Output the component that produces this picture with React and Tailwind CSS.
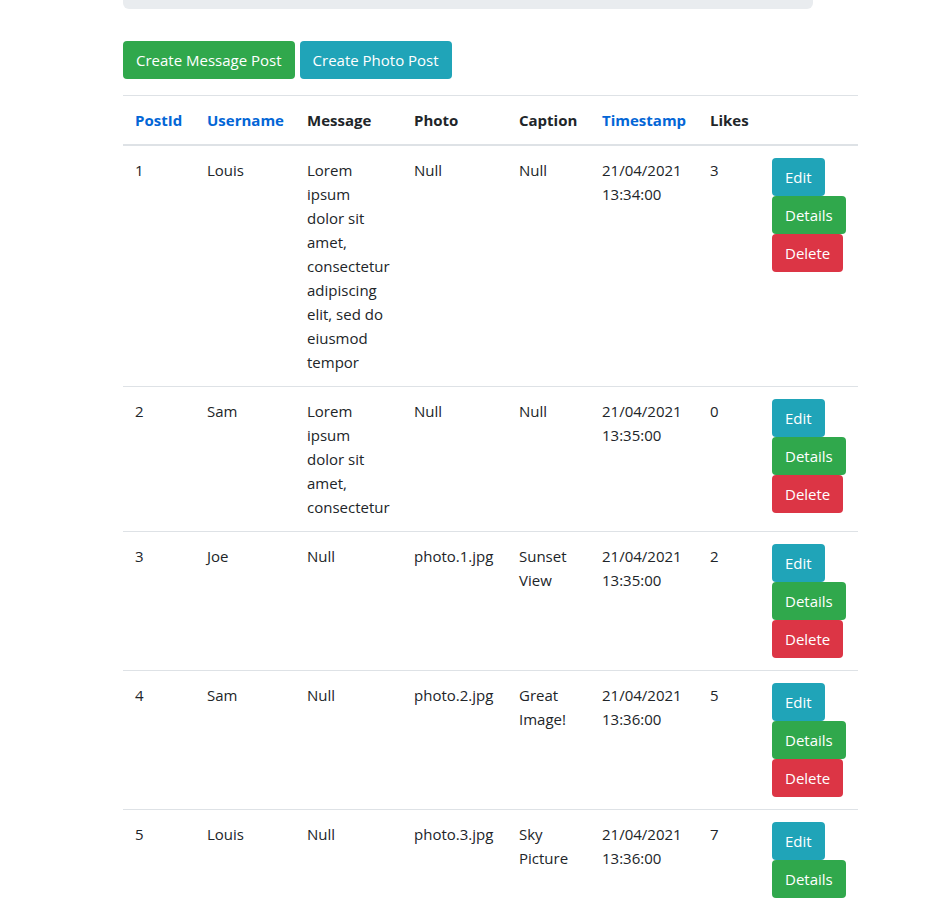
const posts = [
  {
    id: 1,
    username: 'Louis',
    message: 'Lorem ipsum dolor sit amet, consectetur adipiscing elit, sed do eiusmod tempor',
    photo: 'Null',
    caption: 'Null',
    date: '21/04/2021',
    time: '13:34:00',
    likes: 3,
  },
  {
    id: 2,
    username: 'Sam',
    message: 'Lorem ipsum dolor sit amet, consectetur',
    photo: 'Null',
    caption: 'Null',
    date: '21/04/2021',
    time: '13:35:00',
    likes: 0,
  },
  {
    id: 3,
    username: 'Joe',
    message: 'Null',
    photo: 'photo.1.jpg',
    caption: 'Sunset View',
    date: '21/04/2021',
    time: '13:35:00',
    likes: 2,
  },
  {
    id: 4,
    username: 'Sam',
    message: 'Null',
    photo: 'photo.2.jpg',
    caption: 'Great Image!',
    date: '21/04/2021',
    time: '13:36:00',
    likes: 5,
  },
  {
    id: 5,
    username: 'Louis',
    message: 'Null',
    photo: 'photo.3.jpg',
    caption: 'Sky Picture',
    date: '21/04/2021',
    time: '13:36:00',
    likes: 7,
  },
]

const btn = 'inline-block h-[38px] px-3 rounded-[4px] text-white leading-[36px] border border-transparent'
const info = 'bg-[#20a4b8] border-[#20a4b8]'
const success = 'bg-[#30a84c] border-[#30a84c]'
const danger = 'bg-[#dc3545] border-[#dc3545]'

const cell = 'px-3 py-3 align-top text-left border-t border-[#dee2e6]'

function PostRow({ post }) {
  return (
    <tr>
      <td className={cell}>{post.id}</td>
      <td className={cell}>{post.username}</td>
      <td className={cell}>{post.message}</td>
      <td className={cell}>{post.photo}</td>
      <td className={cell}>{post.caption}</td>
      <td className={cell}>
        {post.date}
        <br />
        {post.time}
      </td>
      <td className={cell}>{post.likes}</td>
      <td className={cell}>
        <div className="flex flex-col items-start">
          <a href="#" className={`${btn} ${info}`}>Edit</a>
          <a href="#" className={`${btn} ${success}`}>Details</a>
          <a href="#" className={`${btn} ${danger}`}>Delete</a>
        </div>
      </td>
    </tr>
  )
}

export default function App() {
  const th = 'px-3 py-3 align-bottom text-left font-bold border-t border-b-2 border-[#dee2e6]'
  return (
    <div className="min-h-[898px] bg-white text-[#212529] text-[15px] leading-[24px] font-['Open_Sans',sans-serif]">
      <div className="ml-[123px] w-[735px]">
        <div className="w-[690px] h-[9px] bg-[#e9ecef] rounded-b-[6px]"></div>

        <div className="flex gap-[5px] mt-[32px]">
          <a href="#" className={`${btn} ${success}`}>Create Message Post</a>
          <a href="#" className={`${btn} ${info}`}>Create Photo Post</a>
        </div>

        <table className="table-fixed w-[735px] mt-[16px]">
          <colgroup>
            <col className="w-[72px]" />
            <col className="w-[100px]" />
            <col className="w-[107px]" />
            <col className="w-[105px]" />
            <col className="w-[83px]" />
            <col className="w-[108px]" />
            <col className="w-[62px]" />
            <col className="w-[98px]" />
          </colgroup>
          <thead>
            <tr>
              <th className={th}><a href="#" className="text-[#0366d6]">PostId</a></th>
              <th className={th}><a href="#" className="text-[#0366d6]">Username</a></th>
              <th className={th}>Message</th>
              <th className={th}>Photo</th>
              <th className={th}>Caption</th>
              <th className={th}><a href="#" className="text-[#0366d6]">Timestamp</a></th>
              <th className={th}>Likes</th>
              <th className={th}></th>
            </tr>
          </thead>
          <tbody>
            {posts.map((post) => (
              <PostRow key={post.id} post={post} />
            ))}
          </tbody>
        </table>
      </div>
    </div>
  )
}
